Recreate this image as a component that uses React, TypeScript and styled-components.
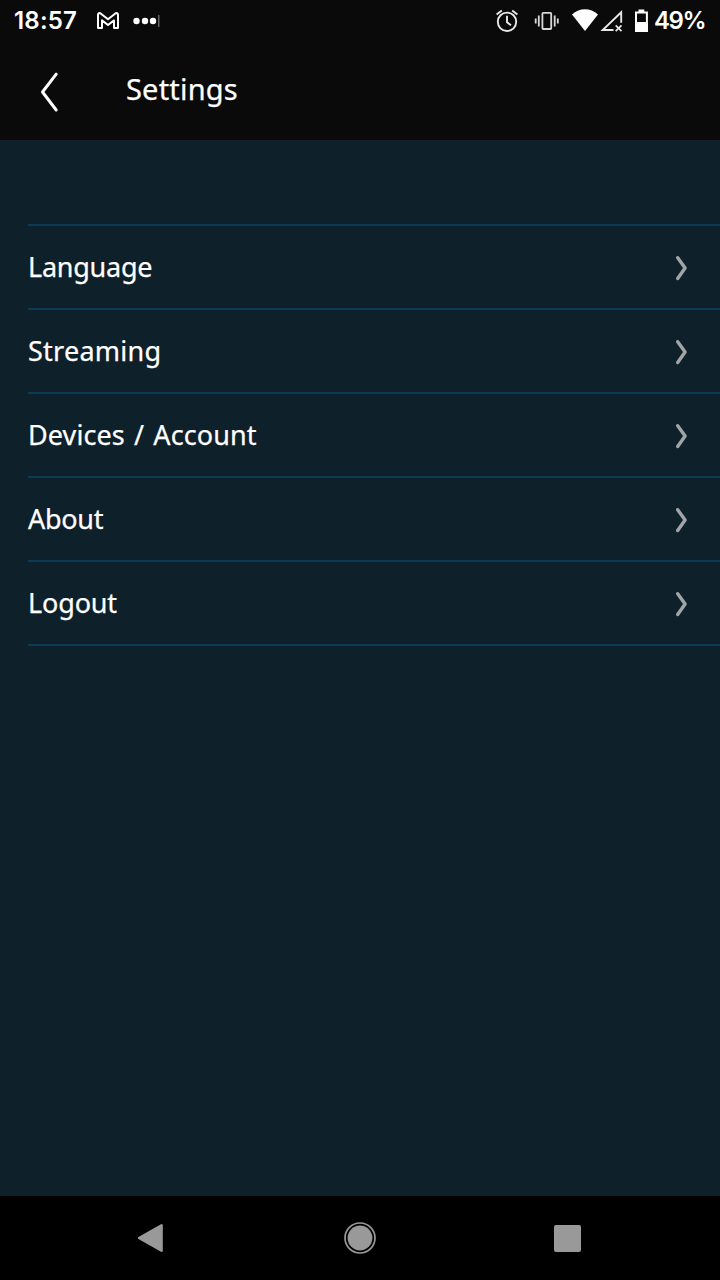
import React from 'react';
import styled, { createGlobalStyle } from 'styled-components';

const GlobalStyle = createGlobalStyle`
  * { box-sizing: border-box; }
  html, body { margin: 0; padding: 0; background: #000; }
  svg { display: block; flex: none; }
`;

const Screen = styled.div`
  width: 720px;
  height: 1280px;
  display: flex;
  flex-direction: column;
  overflow: hidden;
  background: #0e202a;
  font-family: 'Noto Sans', sans-serif;
  color: #fff;
`;

const StatusBar = styled.div`
  height: 42px;
  flex: none;
  display: flex;
  align-items: center;
  justify-content: space-between;
  padding: 0 14px;
  background: #0a0a0a;
`;

const StatusGroup = styled.div`
  display: flex;
  align-items: center;
`;

const StatusText = styled.span<{ $width: number; $spacing: number }>`
  width: ${(p) => p.$width}px;
  font-family: Inter, sans-serif;
  font-size: 24px;
  font-weight: 600;
  line-height: 42px;
  letter-spacing: ${(p) => p.$spacing}px;
  white-space: nowrap;
`;

const Header = styled.header`
  height: 98px;
  flex: none;
  display: flex;
  align-items: center;
  padding: 2px 0 0 38px;
  background: #0a0a0a;
`;

const BackButton = styled.button`
  width: 88px;
  height: 44px;
  padding: 0;
  border: 0;
  background: none;
`;

const Title = styled.h1`
  margin: 0;
  padding-bottom: 6px;
  font-size: 29px;
  font-weight: 400;
  line-height: 40px;
  letter-spacing: 0.2px;
  -webkit-text-stroke: 0.25px #fff;
`;

const List = styled.ul`
  flex: 1;
  margin: 0;
  padding: 84px 0 0 28px;
  list-style: none;
`;

const Row = styled.li`
  height: 84px;
  display: flex;
  align-items: center;
  justify-content: space-between;
  padding-right: 32px;
  border-top: 2px solid #0a3d54;
  &:last-child {
    height: 86px;
    border-bottom: 2px solid #0a3d54;
  }
  svg {
    margin-top: 2px;
  }
`;

const RowLabel = styled.span<{ $spacing: number }>`
  font-size: 27px;
  line-height: 40px;
  letter-spacing: ${(p) => p.$spacing}px;
  word-spacing: 2px;
  white-space: nowrap;
  -webkit-text-stroke: 0.25px #fff;
`;

const NavBar = styled.nav`
  height: 84px;
  flex: none;
  display: flex;
  align-items: center;
  justify-content: space-between;
  padding: 0 139px 0 136px;
  background: #000;
`;

const rows = [
  { label: 'Language', spacing: -0.25 },
  { label: 'Streaming', spacing: 0.25 },
  { label: 'Devices / Account', spacing: 0.1 },
  { label: 'About', spacing: -0.3 },
  { label: 'Logout', spacing: -0.15 },
];

const NotificationIcons = () => (
  <svg width="84" height="42" viewBox="78 0 84 42" fill="none">
    <path
      d="M98 28V15q0-2 2-2l8 6.2 8-6.2q2 0 2 2v13h-4v-7.6l-6 4.6-6-4.6V28Z"
      stroke="#fff"
      strokeWidth="2"
      strokeLinejoin="round"
    />
    <g fill="#fff">
      <circle cx="136.5" cy="21" r="3.2" />
      <circle cx="145" cy="21" r="3.2" />
      <circle cx="153" cy="21" r="3.2" />
    </g>
    <path d="M158.8 15v12" stroke="#777" strokeWidth="1.2" />
  </svg>
);

const SystemIcons = () => (
  <svg width="160" height="42" viewBox="494 0 160 42" fill="none">
    <g stroke="#e8e8e8" strokeWidth="1.9">
      <circle cx="507" cy="21.8" r="9.2" />
      <path d="M507 15.8v6.5l4 3" />
      <path d="M496.6 14.6l5.2-4M517.4 14.6l-5.2-4" />
    </g>
    <g stroke="#d8d8d8" strokeWidth="1.8">
      <rect x="542.4" y="12.8" width="8.8" height="16.2" rx="0.8" />
      <path d="M538.8 15.5v11M535.7 18.5v5M554.7 15.5v11M557.8 18.5v5" />
    </g>
    <path d="M572 14.5C579.5 7.4 590.5 7.4 598 14.5L585 31Z" fill="#fff" />
    <path d="M613.5 30h-10.8L621.2 12.2v10.5" stroke="#e8e8e8" strokeWidth="1.9" />
    <path d="M615.7 25.3l5.8 5.8M621.5 25.3l-5.8 5.8" stroke="#e8e8e8" strokeWidth="1.7" />
    <path d="M638.5 9.5h5.8v3h-5.8z" fill="#fff" />
    <path d="M636 12.5h10.9v18.5h-10.9z" stroke="#fff" strokeWidth="2" />
    <path d="M635 22h12.9v10h-12.9z" fill="#fff" />
  </svg>
);

const BackChevron = () => (
  <svg width="24" height="44" viewBox="38 70 24 44" fill="none">
    <path d="M56.2 74.2L42.5 92l13.7 18" stroke="#fff" strokeWidth="3" strokeLinecap="round" strokeLinejoin="round" />
  </svg>
);

const RowChevron = () => (
  <svg width="16" height="28" viewBox="672 254 16 28" fill="none">
    <path d="M677.7 257.7l7.4 10.3-7.4 10.5" stroke="#a1a5a7" strokeWidth="3.4" strokeLinecap="round" strokeLinejoin="round" />
  </svg>
);

const NavBack = () => (
  <svg width="28" height="32" viewBox="136 1222 28 32">
    <path d="M161.6 1225.2v25.6L139 1238Z" fill="#999" stroke="#999" strokeWidth="2.4" strokeLinejoin="round" />
  </svg>
);

const NavHome = () => (
  <svg width="32" height="32" viewBox="0 0 32 32">
    <circle cx="16" cy="16" r="15" fill="none" stroke="#999" strokeWidth="1.7" />
    <circle cx="16" cy="16" r="12.4" fill="#999" />
  </svg>
);

const NavRecent = styled.span`
  width: 27px;
  height: 27px;
  border-radius: 2px;
  background: #999;
`;

const HomeSlot = styled.span`
  margin-left: 1px;
`;

export default function App() {
  return (
    <>
      <GlobalStyle />
      <Screen>
        <StatusBar>
          <StatusGroup>
            <StatusText $width={64} $spacing={0.2}>18:57</StatusText>
            <NotificationIcons />
          </StatusGroup>
          <StatusGroup>
            <SystemIcons />
            <StatusText $width={52} $spacing={-1.4}>49%</StatusText>
          </StatusGroup>
        </StatusBar>
        <Header>
          <BackButton aria-label="Back">
            <BackChevron />
          </BackButton>
          <Title>Settings</Title>
        </Header>
        <List>
          {rows.map((r) => (
            <Row key={r.label}>
              <RowLabel $spacing={r.spacing}>{r.label}</RowLabel>
              <RowChevron />
            </Row>
          ))}
        </List>
        <NavBar>
          <NavBack />
          <HomeSlot>
            <NavHome />
          </HomeSlot>
          <NavRecent />
        </NavBar>
      </Screen>
    </>
  );
}
